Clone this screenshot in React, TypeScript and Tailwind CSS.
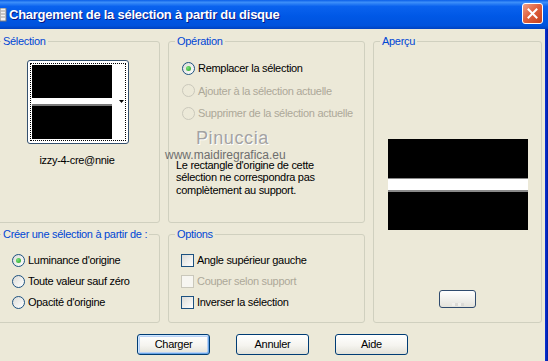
import React from "react";

function GroupBox({
  title,
  className = "",
  children,
}: {
  title: string;
  className?: string;
  children?: React.ReactNode;
}) {
  return (
    <fieldset className={`relative min-w-0 rounded-[3px] border border-[#D0D0BF] ${className}`}>
      <legend className="ml-[6px] whitespace-nowrap px-[2px] leading-[13px] text-[#0046D5]">{title}</legend>
      {children}
    </fieldset>
  );
}

function Radio({
  label,
  checked,
  disabled,
  tall,
}: {
  label: string;
  checked?: boolean;
  disabled?: boolean;
  tall?: boolean;
}) {
  return (
    <div className={`flex items-center ${tall ? "h-[22.5px]" : "h-[21px]"}`}>
      <span
        className={`flex size-[13px] shrink-0 items-center justify-center rounded-full border ${
          disabled
            ? "border-[#CAC8BB]"
            : "border-[#1C5180] bg-[linear-gradient(135deg,#DCDCD7,#FFFFFF)]"
        }`}
      >
        {checked && <span className="size-[5px] rounded-full bg-[radial-gradient(circle_at_35%_35%,#7BE07A,#21A121)]" />}
      </span>
      <span className={`ml-[3px] whitespace-nowrap ${disabled ? "text-[#ACA899]" : "text-black"}`}>{label}</span>
    </div>
  );
}

function Check({ label, disabled }: { label: string; disabled?: boolean }) {
  return (
    <div className="flex h-[21px] items-center">
      <span
        className={`size-[13px] shrink-0 border ${
          disabled
            ? "border-[#CAC8BB] bg-[#F7F6F1]"
            : "border-[#1C5180] bg-[linear-gradient(135deg,#DCDCD7,#FFFFFF)]"
        }`}
      />
      <span className={`ml-[3px] whitespace-nowrap ${disabled ? "text-[#ACA899]" : "text-black"}`}>{label}</span>
    </div>
  );
}

function Button({ label, isDefault }: { label: string; isDefault?: boolean }) {
  return (
    <button
      className={`flex h-[21px] w-[73px] items-center justify-center rounded-[3px] border border-[#003C74] bg-[linear-gradient(180deg,#FFFFFF_0%,#F5F4EF_55%,#E2E1D8_100%)] text-black ${
        isDefault ? "shadow-[inset_1px_1px_0_#CEE7FF,inset_-1px_-1px_0_#69A5E6,inset_0_0_0_2px_#B9D1F5]" : ""
      }`}
    >
      {label}
    </button>
  );
}

export default function App() {
  return (
    <div className="flex h-[361px] w-[548px] flex-col overflow-hidden font-['Liberation_Sans',Arial,sans-serif] text-[11px] tracking-[-0.3px]">
      {/* Title bar */}
      <div className="flex h-[29px] shrink-0 items-center bg-[linear-gradient(180deg,#0A5EE8_0%,#3D8FF9_8%,#0A62EE_22%,#0058E6_55%,#0053DD_88%,#0042C0_100%)]">
        <svg viewBox="0 0 7 14" className="h-[14px] w-[7px] shrink-0" aria-hidden>
          <rect x="0" y="0" width="6" height="13" fill="#F2F2F2" stroke="#7A7A7A" strokeWidth="1" />
          <path d="M1 3h4M1 6h4M1 9h4" stroke="#9A9A9A" strokeWidth="1" />
        </svg>
        <span className="ml-[2px] text-[13px] font-bold tracking-[-0.25px] text-white [text-shadow:1px_1px_0_#0A1883]">
          Chargement de la sélection à partir du disque
        </span>
        <span className="ml-auto mr-[5px] mb-[3px] flex size-[21px] items-center justify-center rounded-[3px] border border-white bg-[linear-gradient(135deg,#F0A088_0%,#E0623F_45%,#C4401C_100%)]">
          <svg viewBox="0 0 11 11" className="size-[11px]" aria-hidden>
            <path d="M1.5 1.5L9.5 9.5M9.5 1.5L1.5 9.5" stroke="white" strokeWidth="2" strokeLinecap="square" />
          </svg>
        </span>
      </div>

      <div className="flex flex-1">
        <div className="flex flex-1 flex-col bg-[#ECE9D8] pt-[6px]">
          <div className="ml-[-6px] grid grid-cols-[166px_197px_169px] grid-rows-[188px_95px] gap-x-[8px] gap-y-[5px]">
            <GroupBox title="Sélection">
              <div className="ml-[32px] mt-[12px] h-[84px] w-[102px] rounded-[3px] border border-[#34506F] bg-white p-[2px]">
                <div className="flex h-full border border-dotted border-black p-[1px]">
                  <div className="flex flex-1 flex-col">
                    <div className="flex-1 bg-black" />
                    <div className="h-[6px] bg-white" />
                    <div className="h-[2px] bg-[#7A7A7A]" />
                    <div className="flex-1 bg-black" />
                  </div>
                  <div className="flex w-[12px] items-center justify-end bg-white pb-[1px]">
                    <svg viewBox="0 0 5 3" className="h-[3px] w-[5px]" aria-hidden>
                      <path d="M0 0h5L2.5 3z" fill="black" />
                    </svg>
                  </div>
                </div>
              </div>
              <div className="mt-[10px] text-center leading-[13px]">izzy-4-cre@nnie</div>
            </GroupBox>

            <GroupBox title="Opération">
              <div className="mt-[9px] pl-[13px]">
                <Radio label="Remplacer la sélection" checked tall />
                <Radio label="Ajouter à la sélection actuelle" disabled tall />
                <Radio label="Supprimer de la sélection actuelle" disabled tall />
              </div>
              <div className="mt-[34px] pl-[7px] leading-[12.5px] text-black">
                Le rectangle d'origine de cette
                <br />
                sélection ne correspondra pas
                <br />
                complètement au support.
              </div>
              <span className="absolute left-[27px] top-[80px] text-[18px] leading-[20px] tracking-[0.6px] text-[#A3A3A3] [text-shadow:1px_1px_0_#FFFFFF]">
                Pinuccia
              </span>
              <span className="absolute left-[-4px] top-[100px] text-[12px] leading-[14px] tracking-[0px] text-[#6E6E6E]">
                www.maidiregrafica.eu
              </span>
            </GroupBox>

            <GroupBox title="Aperçu" className="row-span-2">
              <div className="mx-auto mt-[91px] flex h-[91px] w-[140px] flex-col">
                <div className="flex-1 bg-black" />
                <div className="h-[1px] bg-[#8A8A8A]" />
                <div className="h-[11px] bg-white" />
                <div className="h-[2px] bg-[#8A8A8A]" />
                <div className="flex-1 bg-black" />
              </div>
              <div className="mx-auto mt-[60px] flex h-[18px] w-[37px] items-end justify-center rounded-[3px] border border-[#2F4B6E] bg-[linear-gradient(180deg,#FFFFFF,#E4E3DB)] pb-[1px]">
                <div className="grid grid-cols-4 opacity-40">
                  <span className="size-[3px] bg-white" />
                  <span className="size-[3px] bg-[#C8C8C8]" />
                  <span className="size-[3px] bg-white" />
                  <span className="size-[3px] bg-[#C8C8C8]" />
                </div>
              </div>
            </GroupBox>

            <GroupBox title="Créer une sélection à partir de :">
              <div className="mt-[9px] pl-[17px]">
                <Radio label="Luminance d'origine" checked />
                <Radio label="Toute valeur sauf zéro" />
                <Radio label="Opacité d'origine" />
              </div>
            </GroupBox>

            <GroupBox title="Options">
              <div className="mt-[9px] pl-[12px]">
                <Check label="Angle supérieur gauche" />
                <Check label="Couper selon support" disabled />
                <Check label="Inverser la sélection" />
              </div>
            </GroupBox>
          </div>

          <div className="mt-[11px] flex justify-center gap-[26px]">
            <Button label="Charger" isDefault />
            <Button label="Annuler" />
            <Button label="Aide" />
          </div>
        </div>
        <div className="w-[3px] bg-[linear-gradient(90deg,#0831D9,#001DA0)]" />
      </div>
    </div>
  );
}
